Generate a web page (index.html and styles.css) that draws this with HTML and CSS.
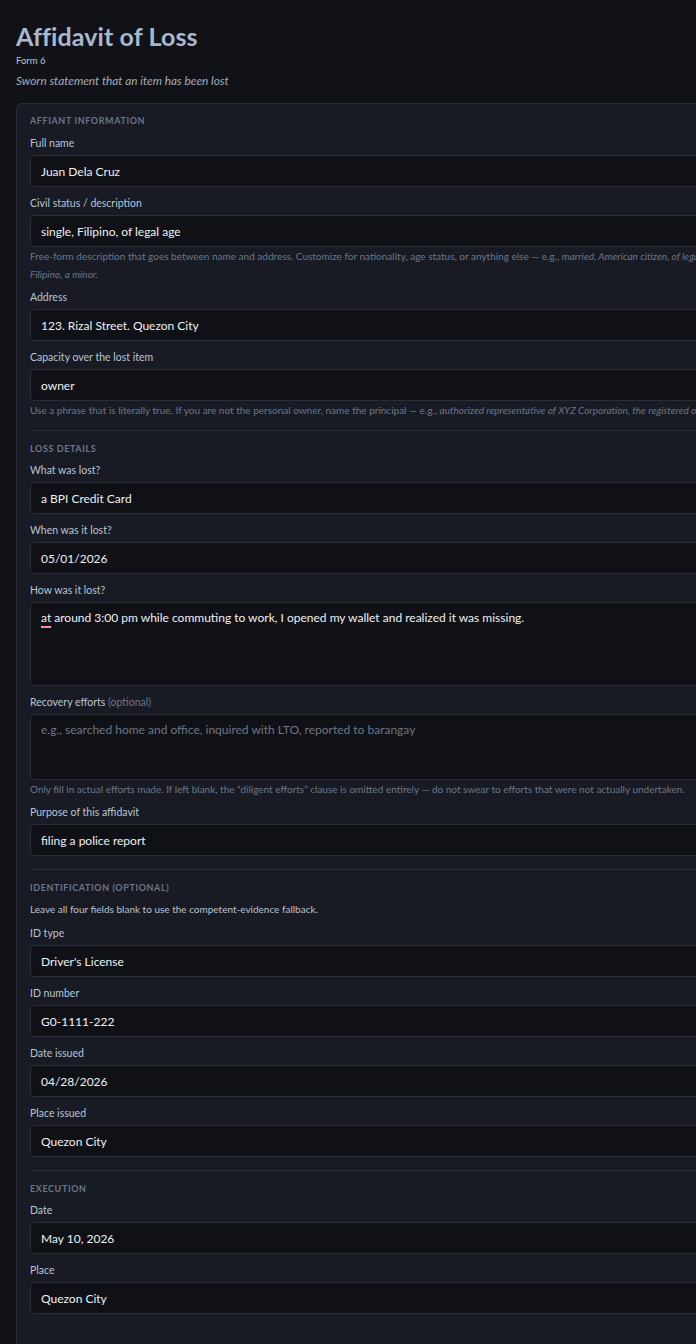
FILE: index.html
```html
<!DOCTYPE html>
<html lang="en">
<head>
<meta charset="utf-8">
<title>Affidavit of Loss</title>
<link rel="stylesheet" href="styles.css">
</head>
<body>
<main class="page">
  <header class="head">
    <h1 class="title">Affidavit of Loss</h1>
    <div class="form-no">Form 6</div>
    <p class="subtitle">Sworn statement that an item has been lost</p>
  </header>

  <div class="card">
    <section class="section first">
      <h2 class="sec-title">Affiant Information</h2>
      <div class="field">
        <div class="label">Full name</div>
        <div class="input">Juan Dela Cruz</div>
      </div>
      <div class="field">
        <div class="label">Civil status / description</div>
        <div class="input">single, Filipino, of legal age</div>
        <p class="help">Free-form description that goes between name and address. Customize for nationality, age status, or anything else — e.g., <em>married, American citizen, of legal age</em> or <em>single, Filipino, a minor.</em></p>
      </div>
      <div class="field">
        <div class="label">Address</div>
        <div class="input">123. Rizal Street. Quezon City</div>
      </div>
      <div class="field">
        <div class="label">Capacity over the lost item</div>
        <div class="input">owner</div>
        <p class="help nowrap">Use a phrase that is literally true. If you are not the personal owner, name the principal — e.g., <em>authorized representative of XYZ Corporation, the registered owner</em>.</p>
      </div>
    </section>

    <section class="section">
      <h2 class="sec-title">Loss Details</h2>
      <div class="field">
        <div class="label">What was lost?</div>
        <div class="input">a BPI Credit Card</div>
      </div>
      <div class="field">
        <div class="label">When was it lost?</div>
        <div class="input">05/01/2026</div>
      </div>
      <div class="field">
        <div class="label">How was it lost?</div>
        <div class="input area tall"><span class="spell">at</span> around 3:00 pm while commuting to work, I opened my wallet and realized it was missing.</div>
      </div>
      <div class="field">
        <div class="label">Recovery efforts <span class="opt">(optional)</span></div>
        <div class="input area short placeholder">e.g., searched home and office, inquired with LTO, reported to barangay</div>
        <p class="help">Only fill in actual efforts made. If left blank, the “diligent efforts” clause is omitted entirely — do not swear to efforts that were not actually undertaken.</p>
      </div>
      <div class="field">
        <div class="label">Purpose of this affidavit</div>
        <div class="input">filing a police report</div>
      </div>
    </section>

    <section class="section">
      <h2 class="sec-title">Identification (optional)</h2>
      <p class="note">Leave all four fields blank to use the competent-evidence fallback.</p>
      <div class="field">
        <div class="label">ID type</div>
        <div class="input">Driver's License</div>
      </div>
      <div class="field">
        <div class="label">ID number</div>
        <div class="input">G0-1111-222</div>
      </div>
      <div class="field">
        <div class="label">Date issued</div>
        <div class="input">04/28/2026</div>
      </div>
      <div class="field">
        <div class="label">Place issued</div>
        <div class="input">Quezon City</div>
      </div>
    </section>

    <section class="section">
      <h2 class="sec-title">Execution</h2>
      <div class="field">
        <div class="label">Date</div>
        <div class="input">May 10, 2026</div>
      </div>
      <div class="field">
        <div class="label">Place</div>
        <div class="input">Quezon City</div>
      </div>
    </section>
    <div class="card-foot"></div>
  </div>
</main>
</body>
</html>
```

FILE: styles.css
```css
html {
  overflow: hidden;
  background: #111217;
}
body {
  margin: 0;
  background: #111217;
  color: #e6e9ee;
  font-family: Lato, "Open Sans", sans-serif;
}
.page {
  padding: 21px 16px 0 16px;
  width: 757px;
}
.head {
  display: flex;
  flex-direction: column;
}
.title {
  margin: 0;
  font-size: 25px;
  line-height: 30px;
  font-weight: 700;
  color: #a9b8cd;
  letter-spacing: 0.1px;
}
.form-no {
  margin-top: 3px;
  font-size: 9.5px;
  line-height: 14px;
  color: #b9c2cf;
}
.subtitle {
  margin: 5px 0 0 0;
  font-size: 11.8px;
  line-height: 16px;
  font-style: italic;
  color: #a3adbb;
}
.card {
  margin-top: 14px;
  background: #181b24;
  border: 1px solid #272c37;
  border-radius: 6px;
  padding: 10px 13px 0 13px;
}
.section {
  display: flex;
  flex-direction: column;
  border-top: 1px solid #272c37;
  margin-top: 4px;
  padding-top: 11px;
}
.section.first {
  border-top: none;
  margin-top: 0;
  padding-top: 0;
}
.sec-title {
  margin: 0 0 7px 0;
  font-size: 9px;
  line-height: 14px;
  font-weight: 700;
  text-transform: uppercase;
  letter-spacing: 0.6px;
  color: #6c7688;
}
.section.first .sec-title {
  margin-bottom: 8px;
}
.note {
  margin: 0 0 10px 0;
  font-size: 10px;
  line-height: 14px;
  color: #b9c2cf;
}
.field {
  display: flex;
  flex-direction: column;
  margin-bottom: 9px;
}
.label {
  font-size: 10.5px;
  line-height: 14px;
  margin-bottom: 5px;
  color: #b9c4d4;
}
.opt {
  color: #6c7688;
}
.input {
  height: 32px;
  box-sizing: border-box;
  background: #101116;
  border: 1px solid #282d38;
  border-radius: 4px;
  padding: 0 10px;
  display: flex;
  align-items: center;
  font-size: 12px;
  color: #eef0f3;
}
.input.area {
  display: block;
  padding-top: 6px;
  line-height: 18px;
}
.input.tall {
  height: 84px;
}
.input.short {
  height: 66px;
}
.placeholder {
  color: #6e7684;
}
.spell {
  text-decoration: underline;
  text-decoration-color: #f58ea3;
  text-decoration-thickness: 2px;
  text-underline-offset: 4px;
}
.help {
  margin: 0 0 -2px 0;
  font-size: 10px;
  line-height: 18px;
  color: #6c7688;
}
.help em {
  font-style: italic;
}
.nowrap {
  white-space: nowrap;
}
.card-foot {
  height: 60px;
}
```
